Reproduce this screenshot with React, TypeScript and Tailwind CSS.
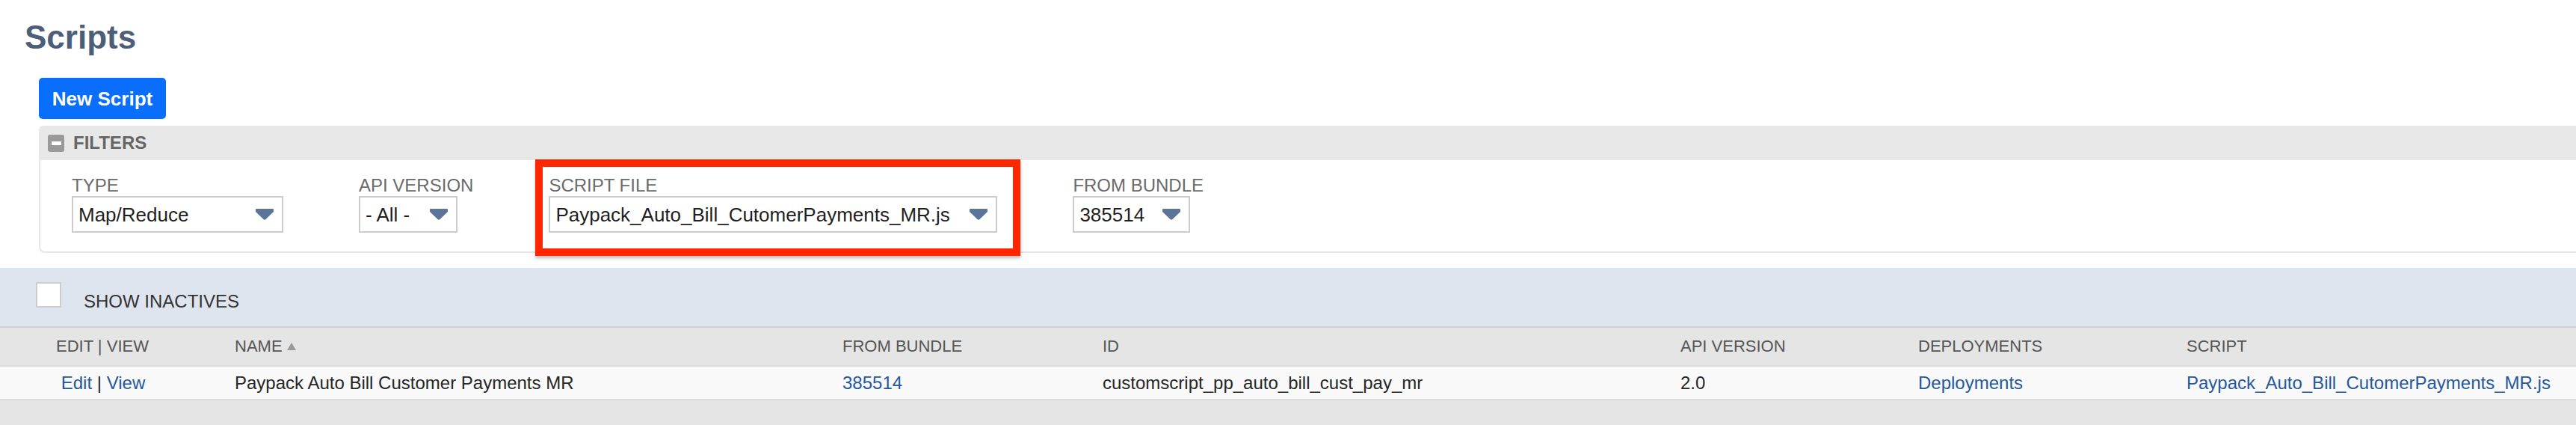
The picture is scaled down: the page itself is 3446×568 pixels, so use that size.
import type { ReactNode } from 'react';

function DropArrow() {
  return (
    <svg width="24" height="15" viewBox="0 0 24 15" className="shrink-0">
      <path
        d="M1 0 H23 Q24 0 24 1 V4 L13.6 14 Q12 15.3 10.4 14 L0 4 V1 Q0 0 1 0 Z"
        fill="#5b7599"
      />
    </svg>
  );
}

interface FilterFieldProps {
  label: string;
  value: string;
  width: string;
}

function FilterField({ label, value, width }: FilterFieldProps) {
  return (
    <div className="flex flex-col">
      <span className="text-[24px] leading-none text-[#6b6b6b] whitespace-nowrap">{label}</span>
      <div
        className={`${width} mt-[2px] h-[49px] border-2 border-[#cccccc] bg-white flex items-center justify-between pl-[7px] pr-[11px]`}
      >
        <span className="text-[26px] leading-none text-[#1f1f1f] whitespace-nowrap">{value}</span>
        <DropArrow />
      </div>
    </div>
  );
}

function Link({ children }: { children: ReactNode }) {
  return <span className="text-[#25589c]">{children}</span>;
}

const cols = 'grid grid-cols-[314px_813px_348px_773px_318px_359px_1fr]';

export default function App() {
  return (
    <div className="min-h-screen w-full bg-white flex flex-col font-['Liberation_Sans',Arial,sans-serif]">
      {/* Page title */}
      <h1 className="pl-[33px] pt-[28px] text-[44px] leading-none font-bold text-[#4d5e78]">Scripts</h1>

      <button
        type="button"
        className="ml-[52px] mt-[32px] w-[170px] h-[55px] rounded-[5px] bg-[#0a6efd] text-white text-[26px] font-bold leading-none flex items-center justify-center"
      >
        New Script
      </button>

      {/* Filters panel */}
      <div className="ml-[52px] mt-[9px]">
        <div className="h-[46px] bg-[#e8e8e8] rounded-tl-[6px] flex items-center pl-[12px] gap-[12px]">
          <span className="w-[22px] h-[23px] rounded-[3px] bg-[#9a9a9a] flex items-center justify-center">
            <span className="w-[13px] h-[5px] bg-white" />
          </span>
          <span className="text-[24px] leading-none font-bold text-[#666666]">FILTERS</span>
        </div>
        <div className="relative bg-white border-l-2 border-b-2 border-[#e6e6e6] rounded-bl-[8px] pt-[22px] pb-[25px] pl-[42px] flex gap-[101px]">
          <FilterField label="TYPE" value="Map/Reduce" width="w-[283px]" />
          <FilterField label="API VERSION" value="- All -" width="w-[132px]" />
          <FilterField label="SCRIPT FILE" value="Paypack_Auto_Bill_CutomerPayments_MR.js" width="w-[600px]" />
          <FilterField label="FROM BUNDLE" value="385514" width="w-[157px]" />

          {/* annotation box */}
          <div className="pointer-events-none absolute left-[662px] top-[-1px] w-[649px] h-[129px] border-[10px] border-[#ff2600] shadow-[0_3px_4px_rgba(0,0,0,0.25)]" />
        </div>
      </div>

      {/* Show inactives bar */}
      <div className="mt-[20px] h-[80px] bg-[#dfe5ef] border-b-2 border-[#d0d0d0] flex items-start pl-[48px]">
        <span className="mt-[19px] w-[34px] h-[34px] bg-white border-2 border-[#cccccc]" />
        <span className="ml-[30px] mt-[33px] text-[24px] leading-none text-[#333333]">SHOW INACTIVES</span>
      </div>

      {/* Table header */}
      <div className={`${cols} h-[52px] bg-[#e5e5e5] border-b-2 border-[#dadada] items-center text-[22px] leading-none text-[#555555]`}>
        <div className="flex justify-center pr-[40px]">EDIT | VIEW</div>
        <div className="flex items-center">
          NAME
          <svg width="12" height="10" viewBox="0 0 12 10" className="ml-[6px]">
            <path d="M6 0 L12 10 H0 Z" fill="#9a9a9a" />
          </svg>
        </div>
        <div>FROM BUNDLE</div>
        <div>ID</div>
        <div>API VERSION</div>
        <div>DEPLOYMENTS</div>
        <div>SCRIPT</div>
      </div>

      {/* Table row */}
      <div className={`${cols} h-[45px] bg-[#f9f9f9] border-b-2 border-[#dddddd] items-center text-[24px] leading-none text-[#262626] whitespace-nowrap`}>
        <div className="flex justify-center pr-[38px]">
          <Link>Edit</Link>&nbsp;|&nbsp;<Link>View</Link>
        </div>
        <div>Paypack Auto Bill Customer Payments MR</div>
        <div>
          <Link>385514</Link>
        </div>
        <div>customscript_pp_auto_bill_cust_pay_mr</div>
        <div>2.0</div>
        <div>
          <Link>Deployments</Link>
        </div>
        <div>
          <Link>Paypack_Auto_Bill_CutomerPayments_MR.js</Link>
        </div>
      </div>

      <div className="flex-1 bg-[#e5e5e5]" />
    </div>
  );
}
